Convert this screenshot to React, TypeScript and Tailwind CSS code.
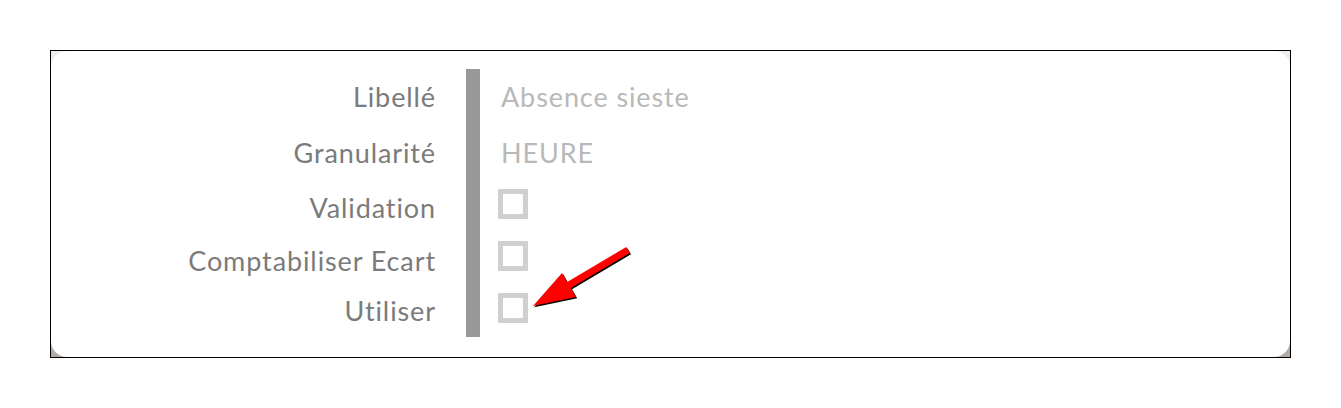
import React from "react";

type Row = { label: string; height: string };

const rows: Row[] = [
  { label: "Libellé", height: "h-[56px]" },
  { label: "Granularité", height: "h-[56px]" },
  { label: "Validation", height: "h-[55px]" },
  { label: "Comptabiliser Ecart", height: "h-[50px]" },
  { label: "Utiliser", height: "h-[51px]" },
];

const Checkbox = () => (
  <div className="w-[30px] h-[30px] border-[5px] border-[#d0d0d0] bg-white" />
);

const Arrow = () => (
  <svg
    className="absolute left-0 top-0 pointer-events-none"
    width={1341}
    height={408}
    viewBox="0 0 1341 408"
  >
    <polygon
      points="626.2,247 629.8,253 570.8,288 576,297 533,306 562,273 567.2,282"
      fill="#000"
      transform="translate(1.2,1.2)"
    />
    <polygon
      points="626.2,247 629.8,253 570.8,288 576,297 533,306 562,273 567.2,282"
      fill="#ff0000"
    />
  </svg>
);

const App = () => {
  return (
    <div className="relative w-[1341px] h-[408px] bg-white font-['Lato',sans-serif]">
      <div className="absolute left-[50px] top-[50px] w-[1241px] h-[308px] border border-black bg-gradient-to-b from-[#f0eeed] to-[#b3a9a4]">
        <div className="w-full h-full bg-white rounded-[16px] flex pt-[18px]">
          <div className="w-[385px] flex flex-col text-[27px] tracking-[0.9px] text-[#7b7b7b]">
            {rows.map((r) => (
              <div key={r.label} className={`${r.height} flex items-center justify-end`}>
                {r.label}
              </div>
            ))}
          </div>
          <div className="ml-[30px] w-[14px] h-[268px] bg-[#999999]" />
          <div className="ml-[18px] flex flex-col text-[27px] tracking-[0.9px] text-[#b9b9b9]">
            <div className="h-[56px] flex items-center pl-[3px]">Absence sieste</div>
            <div className="h-[56px] flex items-center pl-[3px]">HEURE</div>
            <div className="pt-[8px] flex flex-col gap-[22px]">
              <Checkbox />
              <Checkbox />
              <Checkbox />
            </div>
          </div>
        </div>
      </div>
      <Arrow />
    </div>
  );
};

export default App;
